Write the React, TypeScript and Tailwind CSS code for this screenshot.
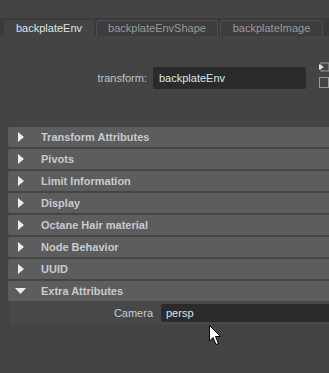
import React from "react";

const sections = [
  "Transform Attributes",
  "Pivots",
  "Limit Information",
  "Display",
  "Octane Hair material",
  "Node Behavior",
  "UUID",
];

function RightTri() {
  return (
    <svg width="6" height="10" viewBox="0 0 6 10" className="block">
      <path d="M0 0 L6 5 L0 10 Z" fill="#ececec" />
    </svg>
  );
}

function DownTri() {
  return (
    <svg width="11" height="6" viewBox="0 0 11 6" className="block">
      <path d="M0 0 L11 0 L5.5 6 Z" fill="#ececec" />
    </svg>
  );
}

export default function App() {
  return (
    <div
      className="relative w-[329px] h-[373px] overflow-hidden bg-[#444444]"
      style={{ fontFamily: '"Liberation Sans", Arial, sans-serif' }}
    >
      {/* tab bar */}
      <div className="mt-[18px] h-[18px] bg-[#3b3b3b] flex items-end pl-[4px] gap-[2px]">
        <div className="w-[90px] h-[16px] bg-[#444444] rounded-t-[3px] flex items-center justify-center text-[11px] text-[#dce4ea]">
          backplateEnv
        </div>
        <div className="w-[122px] h-[16px] bg-[#3d3d3d] border border-b-0 border-[#4d4d4d] rounded-t-[3px] flex items-center justify-center text-[11px] text-[#9a9a9a]">
          backplateEnvShape
        </div>
        <div className="w-[103px] h-[16px] bg-[#3d3d3d] border border-b-0 border-[#4d4d4d] rounded-t-[3px] flex items-center justify-center text-[11px] text-[#9a9a9a]">
          backplateImage
        </div>
      </div>

      {/* transform row */}
      <div className="mt-[31px] h-[22px] flex items-center">
        <div className="w-[148px] text-right text-[11px] text-[#b8c4cc]">transform:</div>
        <div className="ml-[6px] w-[154px] h-[22px] bg-[#2b2b2b] rounded-[2px] flex items-center pl-[6px] text-[11px] text-[#dce4ea]">
          backplateEnv
        </div>
        <div className="ml-[13px] flex flex-col gap-[5px] -mt-[6px]">
          <svg width="10" height="10" viewBox="0 0 10 10" className="block">
            <rect x="2" y="1" width="8" height="8" fill="none" stroke="#9a9a9a" />
            <path d="M0 2 L5 5 L0 8 Z" fill="#dcdcdc" />
          </svg>
          <div className="w-[10px] h-[11px] border border-[#9a9a9a]" />
        </div>
      </div>

      {/* sections */}
      <div className="mt-[38px] pl-[8px] flex flex-col gap-[2px]">
        {sections.map((s) => (
          <div
            key={s}
            className="h-[20px] bg-[#5d5d5d] rounded-l-[2px] flex items-center"
          >
            <div className="w-[33px] pl-[10px] flex items-center">
              <RightTri />
            </div>
            <span className="text-[11px] font-bold text-[#c4ccd2]">{s}</span>
          </div>
        ))}
        <div className="h-[20px] bg-[#5d5d5d] rounded-l-[2px] flex items-center">
          <div className="w-[33px] pl-[7px] flex items-center">
            <DownTri />
          </div>
          <span className="text-[11px] font-bold text-[#c4ccd2]">Extra Attributes</span>
        </div>
      </div>
      <div className="ml-[10px] h-[24px] bg-[#484848] flex items-center">
        <div className="w-[143px] text-right text-[11px] text-[#c4ccd2]">Camera</div>
        <div className="ml-[8px] flex-1 h-[18px] bg-[#2b2b2b] rounded-l-[2px] flex items-center pl-[5px] text-[11px] text-[#dce4ea]">
          persp
        </div>
      </div>

      {/* cursor */}
      <svg
        width="14"
        height="22"
        viewBox="0 0 14 22"
        className="absolute left-[209px] top-[325px]"
      >
        <path
          d="M0.5 0.5 L0.5 16 L4 12.5 L7 19.5 L9.5 18.5 L6.5 11.5 L11.5 11.5 Z"
          fill="#ffffff"
          stroke="#000000"
          strokeWidth="1"
        />
      </svg>
    </div>
  );
}
